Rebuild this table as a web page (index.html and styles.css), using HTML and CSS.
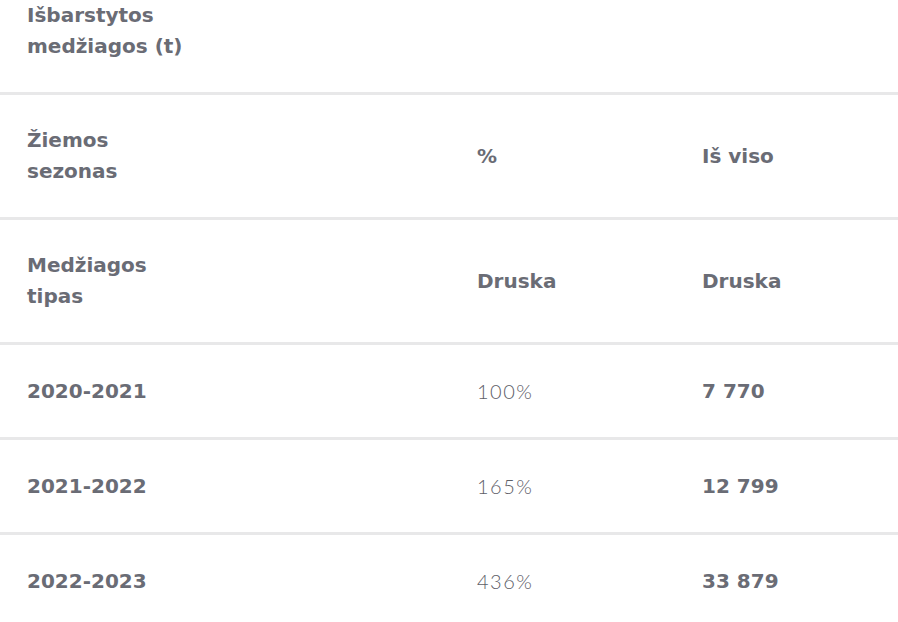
FILE: index.html
```html
<!DOCTYPE html>
<html lang="lt">
<head>
<meta charset="utf-8">
<title>Išbarstytos medžiagos</title>
<link rel="stylesheet" href="styles.css">
</head>
<body>
<table class="data-table">
  <colgroup>
    <col class="col-a">
    <col class="col-b">
    <col class="col-c">
  </colgroup>
  <tbody>
    <tr class="row head first">
      <th>Išbarstytos<br>medžiagos (t)</th>
      <th></th>
      <th></th>
    </tr>
    <tr class="row head">
      <th>Žiemos<br>sezonas</th>
      <th>%</th>
      <th>Iš viso</th>
    </tr>
    <tr class="row head">
      <th>Medžiagos<br>tipas</th>
      <th>Druska</th>
      <th>Druska</th>
    </tr>
    <tr class="row data">
      <td class="year">2020-2021</td>
      <td class="pct">100%</td>
      <td class="total">7 770</td>
    </tr>
    <tr class="row data">
      <td class="year">2021-2022</td>
      <td class="pct">165%</td>
      <td class="total">12 799</td>
    </tr>
    <tr class="row data">
      <td class="year">2022-2023</td>
      <td class="pct">436%</td>
      <td class="total">33 879</td>
    </tr>
  </tbody>
</table>
</body>
</html>
```

FILE: styles.css
```css
html, body {
  margin: 0;
  padding: 0;
  background: #ffffff;
}

body {
  font-family: "DejaVu Sans", "Lato", sans-serif;
  color: #6a6c75;
  overflow: hidden;
}

.data-table {
  width: 900px;
  border-collapse: collapse;
  table-layout: fixed;
}

.col-a { width: 450px; }
.col-b { width: 225px; }
.col-c { width: 225px; }

.row {
  border-bottom: 3px solid #e8e8e9;
}

.row th,
.row td {
  text-align: left;
  vertical-align: middle;
  padding: 30px 0 30px 27px;
}

.head th {
  font-size: 20px;
  line-height: 31px;
  font-weight: 700;
  height: 62px;
}

.head.first th {
  padding-top: 0;
}

.data td {
  font-size: 20px;
  line-height: 32px;
  height: 32px;
}

.data .year {
  font-weight: 700;
  font-size: 20px;
}

.data .pct {
  font-family: "Lato", sans-serif;
  font-weight: 300;
  letter-spacing: 1.5px;
  color: #5e6068;
}

.data .total {
  font-weight: 700;
}
```
